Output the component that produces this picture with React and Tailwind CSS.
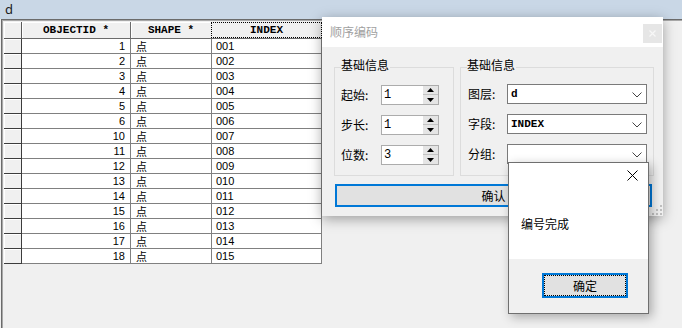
import React from "react";

const rows = [
  [1, "001"], [2, "002"], [3, "003"], [4, "004"], [5, "005"], [6, "006"],
  [10, "007"], [11, "008"], [12, "009"], [13, "010"], [14, "011"], [15, "012"],
  [16, "013"], [17, "014"], [18, "015"],
];

function Table() {
  return (
    <div className="flex flex-col">
      <div className="flex h-[17px] font-['Liberation_Mono',monospace] font-bold text-[11px] text-black">
        <div className="w-[18px] border-r border-b border-[#5a5a5a] bg-[#f0f0f0] shadow-[inset_1px_1px_0_#ffffff]" />
        <div className="w-[109px] border-r border-b border-[#6b6b6b] bg-[#f0f0f0] shadow-[inset_1px_1px_0_#ffffff] flex items-center justify-center leading-none">OBJECTID *</div>
        <div className="w-[81px] border-r border-b border-[#6b6b6b] bg-[#f0f0f0] shadow-[inset_1px_1px_0_#ffffff] flex items-center justify-center leading-none">SHAPE *</div>
        <div className="w-[110px] border-b border-[#6b6b6b] bg-[#f0f0f0] -ml-[1px] w-[111px]">
          <div className="h-full border border-dotted border-black flex items-center justify-center leading-none">INDEX</div>
        </div>
      </div>
      {rows.map(([id, idx]) => (
        <div key={id} className="flex h-[15px] text-[11px] leading-none text-black font-['Liberation_Sans','Noto_Sans_CJK_SC',sans-serif]">
          <div className="w-[18px] border-r border-b border-[#3c3c3c] bg-[#f0f0f0] shadow-[inset_1px_1px_0_#ffffff]" />
          <div className="w-[109px] border-r border-b border-[#808080] bg-white flex items-center justify-end pr-[5px]">{id}</div>
          <div className="w-[81px] border-r border-b border-[#808080] bg-white flex items-center pl-[5px] font-['Noto_Sans_CJK_SC',sans-serif]">点</div>
          <div className="w-[110px] border-r border-b border-[#808080] bg-white flex items-center pl-[4px]">{idx}</div>
        </div>
      ))}
    </div>
  );
}

function Spin({ value }) {
  return (
    <div className="relative w-[58px] h-[20px] border border-[#acacac] bg-white flex items-center pl-[2px] font-['Liberation_Mono',monospace] text-[12px] leading-none">
      {value}
      <div className="absolute right-0 top-0 w-[15px] h-[18px] flex flex-col">
        <div className="h-[9px] bg-[#e5e5e5] border-b border-[#c4c4c4] flex items-center justify-center">
          <svg width="7" height="4" viewBox="0 0 7 4"><polygon points="3.5,0 7,4 0,4" fill="#000" /></svg>
        </div>
        <div className="h-[9px] bg-[#e5e5e5] flex items-center justify-center">
          <svg width="7" height="4" viewBox="0 0 7 4"><polygon points="0,0 7,0 3.5,4" fill="#000" /></svg>
        </div>
      </div>
    </div>
  );
}

function Combo({ value }) {
  return (
    <div className="relative w-[140px] h-[20px] border border-[#7a7a7a] bg-white flex items-center pl-[3px] font-['Liberation_Mono',monospace] font-bold text-[11px] leading-none">
      {value}
      <svg className="absolute right-[4px] top-[7px]" width="10" height="6" viewBox="0 0 10 6">
        <polyline points="0.5,0.5 5,5 9.5,0.5" fill="none" stroke="#444" strokeWidth="1" />
      </svg>
    </div>
  );
}

function Row({ label, children, labelW }) {
  return (
    <div className="flex items-center h-[20px]">
      <div className={labelW + " text-[12px] leading-none text-black"}>{label}</div>
      {children}
    </div>
  );
}

function Dialog() {
  return (
    <div className="absolute left-[322px] top-[17px] w-[341px] h-[199px] bg-[#f0f0f0] shadow-[0_3px_12px_rgba(0,0,0,0.35)] flex flex-col">
      <div className="relative h-[30px] shrink-0 bg-white flex items-center pl-[8px] text-[12px] text-[#a0a0a0]">
        顺序编码
        <div className="absolute right-[1px] top-[7px] w-[19px] h-[19px] bg-[#e6e6e6] flex items-center justify-center">
          <svg width="7" height="7" viewBox="0 0 7 7">
            <path d="M0.5 0.5 L6.5 6.5 M6.5 0.5 L0.5 6.5" stroke="#f7f7f7" strokeWidth="1.2" />
          </svg>
        </div>
      </div>
      <div className="relative flex-1 pl-[12px] pt-[20px] flex flex-col">
        <div className="flex gap-[6px]">
          <div className="relative w-[120px] h-[109px] border border-[#dcdcdc] pl-[6px] pt-[17px] flex flex-col gap-[10px]">
            <span className="absolute left-[6px] -top-[11px] bg-[#f0f0f0] pr-[1px] text-[12px] leading-[16px] text-black">基础信息</span>
            <Row label="起始:" labelW="w-[40px]"><Spin value="1" /></Row>
            <Row label="步长:" labelW="w-[40px]"><Spin value="1" /></Row>
            <Row label="位数:" labelW="w-[40px]"><Spin value="3" /></Row>
          </div>
          <div className="relative w-[194px] h-[109px] border border-[#dcdcdc] pl-[7px] pt-[16px] flex flex-col gap-[10px]">
            <span className="absolute left-[6px] -top-[11px] bg-[#f0f0f0] pr-[1px] text-[12px] leading-[16px] text-black">基础信息</span>
            <Row label="图层:" labelW="w-[39px]"><Combo value="d" /></Row>
            <Row label="字段:" labelW="w-[39px]"><Combo value="INDEX" /></Row>
            <Row label="分组:" labelW="w-[39px]"><Combo value="" /></Row>
          </div>
        </div>
        <div className="mt-[8px] ml-[1px] w-[317px] h-[23px] border-2 border-[#0078d7] bg-[#e1e1e1] flex items-center justify-center text-[12px] text-black">
          确认
        </div>
        <svg className="absolute right-[1px] bottom-[1px]" width="10" height="10" viewBox="0 0 10 10">
          <rect x="8" y="0" width="2" height="2" fill="#c0c0c0" />
          <rect x="8" y="4" width="2" height="2" fill="#c0c0c0" />
          <rect x="4" y="4" width="2" height="2" fill="#c0c0c0" />
          <rect x="8" y="8" width="2" height="2" fill="#c0c0c0" />
          <rect x="4" y="8" width="2" height="2" fill="#c0c0c0" />
          <rect x="0" y="8" width="2" height="2" fill="#c0c0c0" />
        </svg>
      </div>
    </div>
  );
}

function MsgBox() {
  return (
    <div className="absolute left-[508px] top-[162px] w-[141px] h-[152px] border border-[#6f6f6f] bg-[#f0f0f0] shadow-[3px_3px_10px_rgba(0,0,0,0.3)] flex flex-col">
      <div className="h-[96px] shrink-0 bg-white flex flex-col">
        <div className="flex justify-end pr-[10px] pt-[7px]">
          <svg width="11" height="11" viewBox="0 0 11 11">
            <path d="M0.5 0.5 L10.5 10.5 M10.5 0.5 L0.5 10.5" stroke="#000" strokeWidth="1" />
          </svg>
        </div>
        <div className="mt-[35px] pl-[12px] text-[12px] leading-[16px] text-black">编号完成</div>
      </div>
      <div className="pl-[33px] pt-[14px]">
        <div className="w-[86px] h-[25px] border-2 border-[#0078d7] bg-[#e1e1e1]">
          <div className="w-full h-full border border-dotted border-black flex items-center justify-center text-[12px] text-black">确定</div>
        </div>
      </div>
    </div>
  );
}

export default function App() {
  return (
    <div className="relative w-[682px] h-[328px] overflow-hidden bg-[#f0f0f0] flex flex-col font-['Noto_Sans_CJK_SC',sans-serif]">
      <div className="h-[19px] shrink-0 bg-[#c9d7e6] pl-[5px] text-[13px] leading-[18px] text-[#1b1b1b] font-['Noto_Sans',sans-serif]">d</div>
      <div className="flex-1 pl-[1px] flex flex-col">
        <div className="flex-1 border-l border-t border-[#6b6b6b] flex flex-col">
          <div className="flex-1 border-l border-t border-[#a8a8a8] pl-[1px] pt-[1px]">
            <Table />
          </div>
        </div>
      </div>
      <Dialog />
      <MsgBox />
    </div>
  );
}
